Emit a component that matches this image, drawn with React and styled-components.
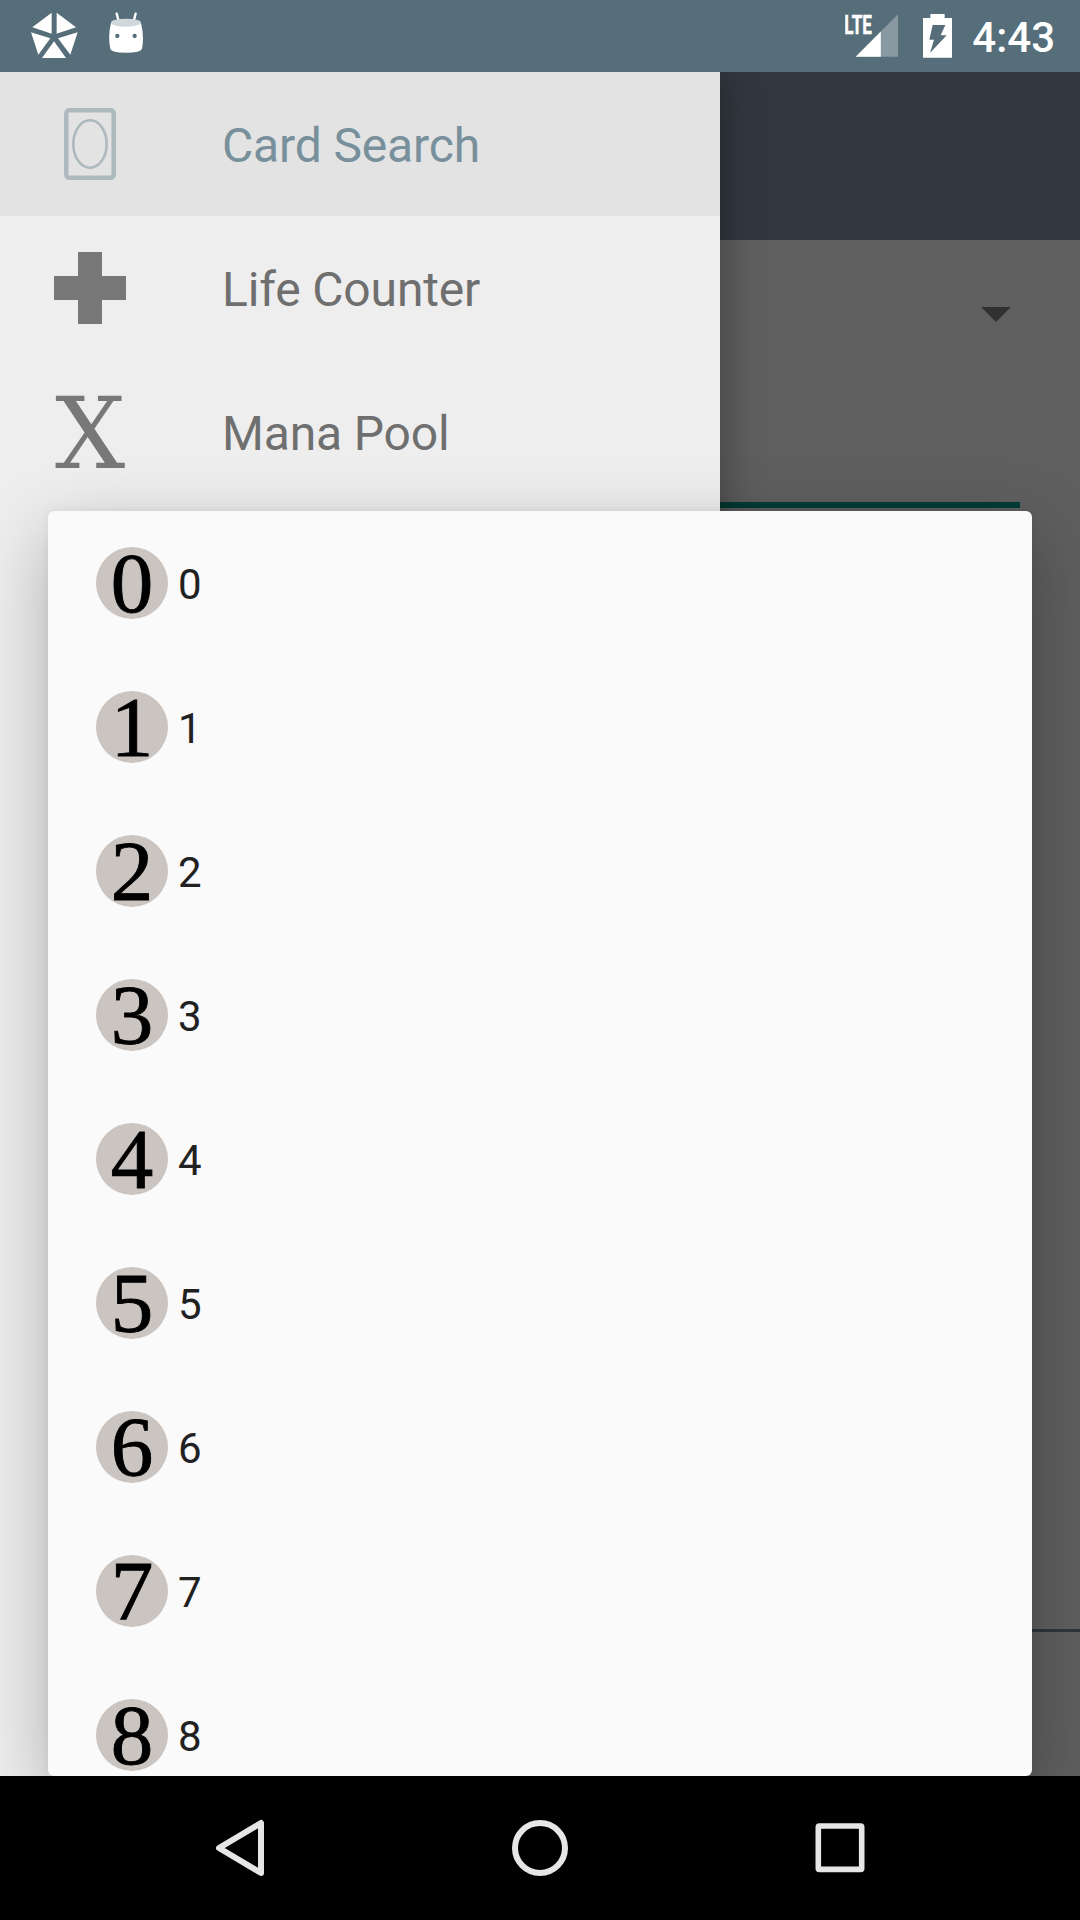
import React from 'react';
import styled, { createGlobalStyle } from 'styled-components';

const GlobalStyle = createGlobalStyle`
  html, body { margin: 0; padding: 0; background: #000; }
  * { box-sizing: border-box; }
`;

const Screen = styled.div`
  width: 1080px;
  height: 1920px;
  display: flex;
  flex-direction: column;
  overflow: hidden;
  font-family: Roboto, "Noto Sans", sans-serif;
`;

const StatusBar = styled.header`
  height: 72px;
  flex: none;
  display: flex;
  justify-content: space-between;
  align-items: center;
  padding: 0 25px 0 30px;
  background: #566e79;
  color: #fff;
`;

const StatusGroup = styled.div`
  display: flex;
  align-items: center;
  height: 72px;
  gap: ${(p) => p.$gap}px;
`;

const StatusIcon = styled.svg`
  display: block;
  flex: none;
`;

const NetworkText = styled.text`
  font-family: Roboto, sans-serif;
  font-size: 26px;
  font-weight: 700;
  stroke: #fff;
  stroke-width: 0.5px;
`;

const Clock = styled.span`
  font-size: 42px;
  line-height: 72px;
  font-weight: 500;
  padding-top: 4px;
`;

const Body = styled.main`
  position: relative;
  height: 1704px;
  flex: none;
  display: flex;
  flex-direction: column;
  background: #5f5f5f;
  overflow: hidden;
`;

const AppBar = styled.div`
  height: 168px;
  flex: none;
  background: #31383f;
`;

const Form = styled.section`
  display: flex;
  flex-direction: column;
  flex: 1;
`;

const SpinnerRow = styled.div`
  display: flex;
  justify-content: flex-end;
  height: 262px;
  padding: 67px 69px 0 0;
`;

const Caret = styled.i`
  width: 0;
  height: 0;
  border: 15px solid transparent;
  border-top-color: #303030;
  border-bottom-width: 0;
`;

const FieldUnderline = styled.div`
  height: 6px;
  margin: 0 60px;
  background: #003c36;
`;

const FooterRule = styled.div`
  height: 3px;
  margin-top: 1121px;
  background: #2d373d;
`;

const Drawer = styled.nav`
  position: absolute;
  top: 0;
  left: 0;
  width: 720px;
  height: 100%;
  background: #eee;
  box-shadow: 0 0 40px rgba(0, 0, 0, 0.36);
`;

const DrawerItem = styled.a`
  display: flex;
  align-items: center;
  height: 144px;
  padding-left: 48px;
  gap: 90px;
  font-size: 48px;
  line-height: 56px;
  letter-spacing: -0.15px;
  background: ${(p) => (p.$active ? '#e3e3e3' : 'transparent')};
  color: ${(p) => (p.$active ? '#78909c' : '#6f6f6f')};
`;

const DrawerLabel = styled.span`
  padding-top: 3px;
`;

const DrawerIcon = styled.span`
  display: flex;
  align-items: center;
  justify-content: center;
  width: 84px;
  height: 72px;
  color: #787878;
`;

const ManaLetter = styled.span`
  font-family: "DejaVu Serif", serif;
  font-size: 98.7px;
  line-height: 72px;
  padding-top: 4px;
`;

const Dialog = styled.div`
  position: absolute;
  top: 439px;
  left: 48px;
  width: 984px;
  height: 1265px;
  overflow: hidden;
  border-radius: 6px;
  background: #fafafa;
  box-shadow: 0 24px 72px rgba(0, 0, 0, 0.27), 0 0 10px rgba(0, 0, 0, 0.06);
`;

const Option = styled.div`
  display: flex;
  align-items: center;
  height: 144px;
  padding-left: 48px;
  gap: 10px;
`;

const Symbol = styled.span`
  width: 72px;
  height: 72px;
  border-radius: 50%;
  background: #cbc5c1;
  color: #000;
  text-align: center;
  font-family: "Liberation Serif", serif;
  font-size: 85px;
  line-height: 72px;
  -webkit-text-stroke: 0.9px #000;
`;

const OptionLabel = styled.span`
  color: #212121;
  font-size: 42px;
  line-height: 50px;
  padding-top: 3px;
`;

const NavBar = styled.footer`
  height: 144px;
  flex: none;
  display: flex;
  align-items: center;
  justify-content: center;
  background: #000;
`;

const NavButton = styled.span`
  width: 300px;
  display: flex;
  justify-content: center;
`;

function CardIcon() {
  return (
    <svg width="72" height="72" viewBox="0 0 72 72" fill="none" stroke="#adb9bf">
      <rect x="12.3" y="2.2" width="47.4" height="67.6" rx="3" strokeWidth="4.5" />
      <ellipse cx="36" cy="36" rx="16.7" ry="23.7" strokeWidth="2.6" />
    </svg>
  );
}

function PlusIcon() {
  return (
    <svg width="72" height="72" viewBox="0 0 72 72" fill="#787878">
      <path d="M24 0h24v24h24v24H48v24H24V48H0V24h24z" />
    </svg>
  );
}

const drawerItems = [
  { label: 'Card Search', icon: <CardIcon />, active: true },
  { label: 'Life Counter', icon: <PlusIcon /> },
  { label: 'Mana Pool', icon: <ManaLetter>X</ManaLetter> },
];

const options = ['0', '1', '2', '3', '4', '5', '6', '7', '8'];

export default function App() {
  return (
    <Screen>
      <GlobalStyle />
      <StatusBar>
        <StatusGroup $gap={30}>
          <StatusIcon width="48" height="72" viewBox="90 0 144 216" fill="#fff">
            <path d="M155 38v63L97 82zM170 38l58 44-58 19zM233 97l-22 67-37-49zM162 124l36 50h-72zM93 97l58 18-36 49z" />
          </StatusIcon>
          <StatusIcon width="36" height="72" viewBox="324 0 108 216">
            <path d="M350 41l7 26M407 41l-7 26" stroke="#fff" strokeWidth="7" strokeLinecap="round" />
            <path d="M333 69Q323 108 331 146Q334 158 378 158Q422 158 426 146Q433 108 423 69z" fill="#fff" />
            <ellipse cx="378" cy="68" rx="45" ry="12" fill="#d0d8db" />
            <circle cx="352" cy="108" r="6.5" fill="#566e79" />
            <circle cx="404" cy="108" r="6.5" fill="#566e79" />
          </StatusIcon>
        </StatusGroup>
        <StatusGroup $gap={15}>
          <StatusIcon width="61" height="72" viewBox="0 0 61 72" fill="#fff">
            <path d="M53 14.3v42.4H10.7z" opacity=".3" />
            <path d="M35.8 31.6v25.1H10.7z" />
            <NetworkText x="-0.7" y="33.6" textLength="27.6" lengthAdjust="spacingAndGlyphs">LTE</NetworkText>
          </StatusIcon>
          <StatusIcon width="36" height="72" viewBox="303 0 108 216">
            <path fill="#fff" d="M309 54h22V42h43v12h22v119h-87z" />
            <path fill="#566e79" d="M338 75h38l-14 31h18l-50 53 12-40h-14z" />
          </StatusIcon>
          <Clock>4:43</Clock>
        </StatusGroup>
      </StatusBar>

      <Body>
        <AppBar />
        <Form>
          <SpinnerRow>
            <Caret />
          </SpinnerRow>
          <FieldUnderline />
          <FooterRule />
        </Form>
        <Drawer>
          {drawerItems.map((item) => (
            <DrawerItem key={item.label} $active={item.active}>
              <DrawerIcon>{item.icon}</DrawerIcon>
              <DrawerLabel>{item.label}</DrawerLabel>
            </DrawerItem>
          ))}
        </Drawer>
        <Dialog>
          {options.map((value) => (
            <Option key={value}>
              <Symbol>{value}</Symbol>
              <OptionLabel>{value}</OptionLabel>
            </Option>
          ))}
        </Dialog>
      </Body>

      <NavBar>
        <NavButton>
          <svg width="60" height="60" viewBox="0 0 60 60" fill="none" stroke="#e6e6e6" strokeWidth="6" strokeLinejoin="round">
            <path d="M51 5v50L9 30z" />
          </svg>
        </NavButton>
        <NavButton>
          <svg width="60" height="60" viewBox="0 0 60 60" fill="none" stroke="#e6e6e6" strokeWidth="6">
            <circle cx="30" cy="30" r="25" />
          </svg>
        </NavButton>
        <NavButton>
          <svg width="60" height="60" viewBox="0 0 60 60" fill="none" stroke="#e6e6e6" strokeWidth="5.6" strokeLinejoin="round">
            <rect x="8.3" y="8" width="43.4" height="43.4" rx="1" />
          </svg>
        </NavButton>
      </NavBar>
    </Screen>
  );
}
